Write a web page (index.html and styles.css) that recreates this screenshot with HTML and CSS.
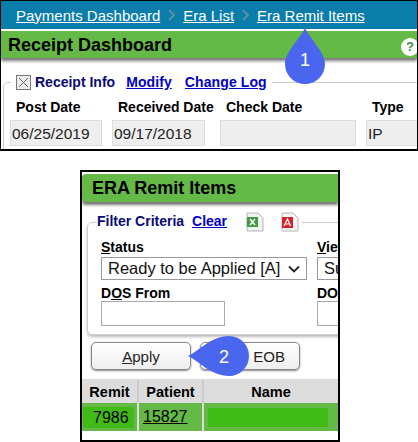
FILE: index.html
```html
<!DOCTYPE html>
<html>
<head>
    <title>Receipt Dashboard</title>
    <link rel="stylesheet" href="styles.css">
</head>
<body>
    <div class="receipt-panel">
        <div class="crumbs">
            <a href="#">Payments Dashboard</a>
            <svg class="crumb-sep" width="10" height="14" viewBox="0 0 10 14"><path d="M2 2l5 5-5 5" fill="none" stroke="#5f8f9f" stroke-width="2"/></svg>
            <a href="#">Era List</a>
            <svg class="crumb-sep" width="10" height="14" viewBox="0 0 10 14"><path d="M2 2l5 5-5 5" fill="none" stroke="#5f8f9f" stroke-width="2"/></svg>
            <a href="#">Era Remit Items</a>
        </div>
        <div class="title-bar receipt-title">
            <h2>Receipt Dashboard</h2>
            <span class="help">?</span>
        </div>
        <fieldset class="receipt-box">
            <legend>
                <span class="check-box"><svg width="13" height="13" viewBox="0 0 13 13"><path d="M2 2l9 9M11 2l-9 9" stroke="#666" stroke-width="1"/></svg></span>
                <span class="legend-text">Receipt Info</span>
                <a href="#" class="modify-link">Modify</a>
                <a href="#" class="log-link">Change Log</a>
            </legend>
            <div class="receipt-fields">
                <div class="field post-field"><label>Post Date</label><div class="readonly">06/25/2019</div></div>
                <div class="field received-field"><label>Received Date</label><div class="readonly">09/17/2018</div></div>
                <div class="field check-field"><label>Check Date</label><div class="readonly"></div></div>
                <div class="field type-field"><label>Type</label><div class="readonly">IP</div></div>
            </div>
        </fieldset>
    </div>

    <div class="era-panel">
        <div class="title-bar era-title">
            <h2>ERA Remit Items</h2>
        </div>
        <fieldset class="filter-box">
            <legend>
                <span class="legend-text">Filter Criteria</span>
                <a href="#"><u>C</u>lear</a>
                <svg class="file-icon first-icon" width="18" height="20" viewBox="0 0 18 20"><path d="M1 1h11l5 5v13H1z" fill="#f1f1f1" stroke="#b5b5b5"/><rect x="1" y="5" width="11" height="10" fill="#3f9a46"/><path d="M4 7l5 6M9 7l-5 6" stroke="#fff" stroke-width="1.5"/></svg>
                <svg class="file-icon" width="18" height="20" viewBox="0 0 18 20"><path d="M1 1h11l5 5v13H1z" fill="#f4f4f4" stroke="#b5b5b5"/><rect x="1" y="5" width="11" height="11" fill="#d3232a"/><path d="M3 14l3.500-7 3 7M4.500 12h4" fill="none" stroke="#fff" stroke-width="1.200"/></svg>
            </legend>
            <div class="filter-row status-row">
                <div class="filter-left">
                    <label><u>S</u>tatus</label>
                    <div class="fake-select">Ready to be Applied [A]<svg width="12" height="8" viewBox="0 0 12 8"><path d="M1 1.500l5 5 5-5" fill="none" stroke="#222" stroke-width="1.800"/></svg></div>
                </div>
                <div class="filter-right">
                    <label><u>V</u>iew</label>
                    <div class="fake-select">Summary</div>
                </div>
            </div>
            <div class="filter-row">
                <div class="filter-left">
                    <label>D<u>O</u>S From</label>
                    <div class="text-box"></div>
                </div>
                <div class="filter-right">
                    <label>DOS To</label>
                    <div class="text-box"></div>
                </div>
            </div>
        </fieldset>
        <div class="buttons">
            <button class="apply-btn"><u>A</u>pply</button>
            <button class="eob-btn">EOB</button>
        </div>
        <table class="remit-table">
            <thead>
                <tr><th class="remit-col">Remit</th><th class="patient-col">Patient</th><th class="name-col">Name</th></tr>
            </thead>
            <tbody>
                <tr>
                    <td class="remit-col"><span class="remit-num">7986</span></td>
                    <td class="patient-col"><u>15827</u></td>
                    <td class="name-col"><div class="name-block"></div></td>
                </tr>
            </tbody>
        </table>
    </div>

    <!-- callouts -->
    <svg class="callout callout-one" width="40" height="57" viewBox="0 0 40 57"><path d="M20 1C25 12 40 25 40 37a20 20 0 0 1-40 0C0 25 15 12 20 1z" fill="#4a66ee"/></svg>
    <span class="callout-num num-one">1</span>
    <svg class="callout callout-two" width="62" height="40" viewBox="0 0 62 40"><path d="M1 20C12 15 24 0 42 0a20 20 0 0 1 0 40C24 40 12 25 1 20z" fill="#4a66ee"/></svg>
    <span class="callout-num num-two">2</span>
</body>
</html>
```

FILE: styles.css
```css
body {
    font-family: "Liberation Sans", Arial, sans-serif;
    margin: 0;
    padding: 0;
    width: 418px;
    height: 442px;
    position: relative;
    overflow: hidden;
    background-color: #fff;
}

.receipt-panel {
    height: 148px;
    border: 1px solid #000;
    border-bottom-width: 2px;
    overflow: hidden;
}

.crumbs {
    height: 28px;
    background-color: #0a7dab;
    display: flex;
    align-items: center;
    padding-left: 15px;
    box-sizing: border-box;
    font-size: 15px;
}

    .crumbs a {
        color: #fff;
    }

.crumb-sep {
    margin: 0 6px 0 7px;
}

.title-bar {
    background-color: #65b946;
    box-shadow: 0 3px 3px #777;
    display: flex;
    align-items: center;
    justify-content: space-between;
}

    .title-bar h2 {
        margin: 0;
        font-size: 18px;
        color: #000;
    }

.receipt-title {
    margin-top: 2px;
    height: 27px;
    padding: 1px 0 0 7px;
    box-sizing: border-box;
}

.help {
    width: 18px;
    height: 18px;
    border-radius: 50%;
    background-color: #fff;
    color: #3f8f3f;
    font-size: 13px;
    font-weight: bold;
    text-align: center;
    line-height: 18px;
    margin: 3px -2px 0 0;
}

fieldset {
    border: 1px solid #ccc;
    border-radius: 5px;
    margin: 0;
    padding: 0;
    min-width: 0;
}

legend {
    font-size: 14px;
    font-weight: bold;
    padding: 0 5px;
    white-space: nowrap;
}

    legend a {
        color: #0000c8;
    }

.legend-text {
    color: #0a0a78;
}

.receipt-box {
    margin: 16px -10px 0 2px;
    height: 80px;
}

    .receipt-box legend {
        margin-left: 7px;
        display: flex;
        align-items: center;
        height: 16px;
    }

.modify-link {
    margin-left: 11px;
    letter-spacing: 0.1px;
}

.log-link {
    margin-left: 13px;
    letter-spacing: 0.1px;
}

.check-box {
    width: 13px;
    height: 13px;
    border: 1px solid #777;
    background-color: #eee;
    display: inline-block;
    margin-right: 4px;
}

    .check-box svg {
        display: block;
    }

.receipt-fields {
    display: flex;
    margin-top: 9px;
    margin-left: 6px;
}

.field label {
    display: block;
    font-size: 14px;
    font-weight: bold;
    margin-left: 6px;
    white-space: nowrap;
}

.readonly {
    background-color: #eee;
    border: 1px solid #ddd;
    font-size: 15.500px;
    height: 26px;
    line-height: 26px;
    margin-top: 5px;
    box-sizing: border-box;
    padding-left: 1px;
    color: #222;
}

.post-field {
    width: 92px;
    margin-right: 10px;
}

.received-field {
    width: 93px;
    margin-right: 15px;
}

.check-field {
    width: 136px;
    margin-right: 10px;
}

.type-field {
    width: 60px;
}

.era-panel {
    position: absolute;
    left: 80px;
    top: 170px;
    width: 256px;
    height: 268px;
    border: 2px solid #000;
    overflow: hidden;
}

.era-title {
    height: 28px;
    margin-top: 2px;
    padding-left: 10px;
    border-radius: 4px 0 0 4px;
}

.filter-box {
    margin: 10px -40px 0 5px;
    height: 121px;
    box-shadow: 0 2px 3px #bbb;
    padding-left: 13px;
}

    .filter-box legend {
        margin-left: -4px;
        padding: 0 3px 0 0;
    }

        .filter-box legend a {
            margin-left: 4px;
        }

.file-icon {
    vertical-align: middle;
    margin-left: 13px;
}

.first-icon {
    margin-left: 15px;
}

.filter-row {
    display: flex;
}

.filter-row label {
    display: block;
    font-size: 14px;
    font-weight: bold;
}

.status-row {
    margin-top: 7px;
    margin-bottom: 5px;
}

    .status-row label {
        margin-bottom: 2px;
    }

.filter-left {
    width: 206px;
    margin-right: 10px;
    flex-shrink: 0;
}

.filter-right {
    width: 100px;
    flex-shrink: 0;
}

.fake-select {
    height: 23px;
    border: 1px solid #999;
    box-sizing: border-box;
    font-size: 16.500px;
    line-height: 21px;
    padding: 0 6px 0 6px;
    display: flex;
    align-items: center;
    justify-content: space-between;
    color: #111;
    white-space: nowrap;
    overflow: hidden;
}

.text-box {
    width: 124px;
    height: 25px;
    border: 1px solid #aaa;
    box-sizing: border-box;
}

.buttons {
    display: flex;
    gap: 9px;
    margin: 7px 0 0 9px;
}

    .buttons button {
        width: 100px;
        height: 28px;
        border: 1px solid #888;
        border-radius: 5px;
        background: linear-gradient(#fff, #eee);
        box-shadow: 0 1px 2px #888;
        font-family: inherit;
        font-size: 15px;
        color: #222;
        padding: 0;
    }

.eob-btn {
    text-align: right;
    padding-right: 14px !important;
}

.remit-table {
    border-collapse: collapse;
    width: 100%;
    margin-top: 9px;
    table-layout: fixed;
}

    .remit-table th {
        background-color: #dcdcdc;
        height: 24px;
        padding: 1px 0 0 0;
        box-sizing: border-box;
        font-size: 14.500px;
        text-align: center;
        border-right: 2px solid #ccc;
    }

    .remit-table td {
        background-color: #65b946;
        height: 28px;
        padding: 0;
        font-size: 16px;
        border-right: 2px solid #ddd;
    }

    .remit-table .name-col {
        border-right: none;
    }

.remit-col {
    width: 56px;
}

.patient-col {
    width: 65px;
}

td.patient-col {
    padding-left: 4px;
}

.remit-num {
    display: block;
    background-color: #41bb17;
    margin: 0 3px 0 1px;
    padding-left: 10px;
    line-height: 21px;
}

.name-block {
    background-color: #41bb17;
    height: 19px;
    margin-left: 4px;
    width: 120px;
}

.callout {
    position: absolute;
}

.callout-one {
    left: 285px;
    top: 27px;
}

.callout-two {
    left: 187px;
    top: 336px;
}

.callout-num {
    position: absolute;
    color: #fff;
    font-size: 18px;
    line-height: 20px;
}

.num-one {
    left: 300px;
    top: 50px;
}

.num-two {
    left: 219px;
    top: 347px;
}
```
